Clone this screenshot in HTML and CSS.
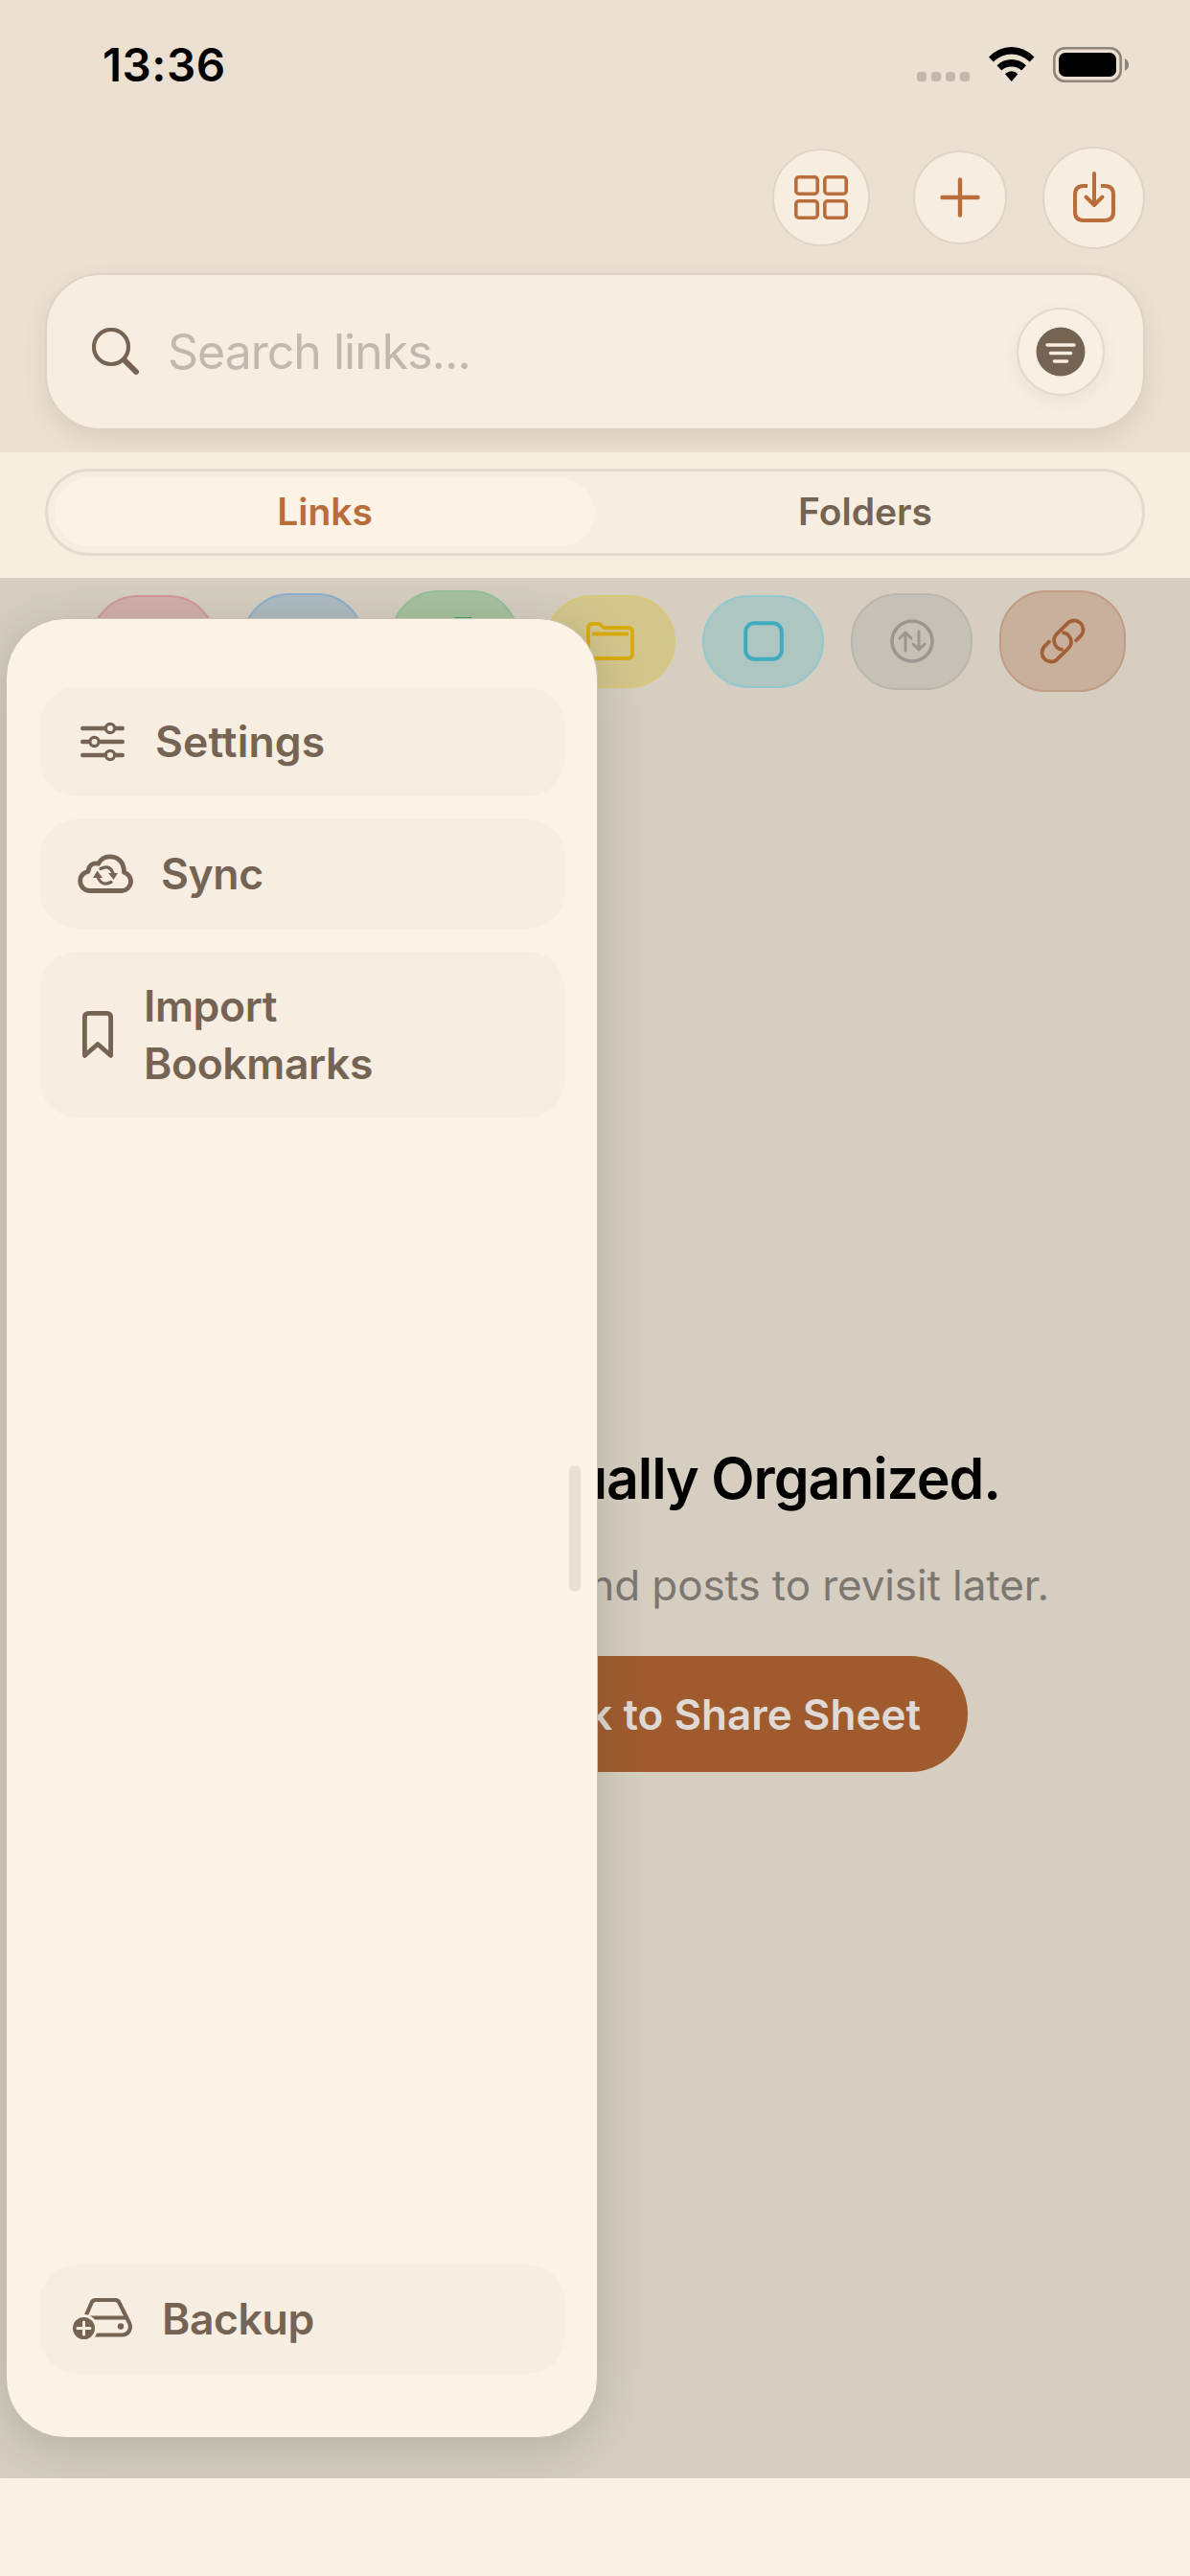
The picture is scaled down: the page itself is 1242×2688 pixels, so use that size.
FILE: index.html
```
<!DOCTYPE html>
<html lang="en">
  <head>
    <meta charset="UTF-8" />
    <meta name="viewport" content="width=device-width, initial-scale=1.0" />
    <title>Links</title>
    <link rel="stylesheet" href="styles.css">
  </head>
  <body>
    <header class="header">
      <div class="status-bar">
        <span class="time">13:36</span>
        <div class="status-icons">
          <svg class="dots" width="56" height="10" viewBox="0 0 56 10">
            <rect x="0" width="10" height="10" rx="3.5" />
            <rect x="15" width="10" height="10" rx="3.5" />
            <rect x="30" width="10" height="10" rx="3.5" />
            <rect x="45" width="10" height="10" rx="3.5" />
          </svg>
          <svg class="wifi" width="48" height="36" viewBox="0 0 48 36">
            <path d="M0 10.5Q10 0 23.7 0T47.5 10.5L42.700 15.500Q34 7.500 23.700 7.500T4.800 15.500Z" />
            <path d="M8.500 19.300Q15 13 23.700 13T39 19.300L34.200 24.500Q30 20.500 23.700 20.500T13.300 24.500Z" />
            <path d="M17 28.300Q20 25.300 23.700 25.300T30.400 28.300L23.700 36Z" />
          </svg>
          <svg class="battery" width="79" height="37" viewBox="0 0 79 37">
            <rect x="1.300" y="1.300" width="69.400" height="34.400" rx="11" fill="none" stroke="#8e857b" stroke-width="2.600" />
            <rect x="6" y="6" width="60" height="25" rx="7" fill="#000" />
            <path d="M75 12Q79 14 79 18.500T75 25Z" fill="#8e857b" />
          </svg>
        </div>
      </div>

      <div class="toolbar">
        <button class="round-btn grid-btn">
          <svg width="56" height="46" viewBox="0 0 56 46" fill="none" stroke="#b86d3a" stroke-width="3.600">
            <rect x="1.800" y="1.800" width="22.400" height="17.400" rx="3" />
            <rect x="31.800" y="1.800" width="22.400" height="17.400" rx="3" />
            <rect x="1.800" y="26.800" width="22.400" height="17.400" rx="3" />
            <rect x="31.800" y="26.800" width="22.400" height="17.400" rx="3" />
          </svg>
        </button>
        <button class="round-btn plus-btn">
          <svg width="42" height="42" viewBox="0 0 42 42" stroke="#b86d3a" stroke-width="4.400" stroke-linecap="round">
            <path d="M21 2.500V39.500M2.500 21H39.500" />
          </svg>
        </button>
        <button class="round-btn import-btn">
          <svg width="44" height="54" viewBox="0 0 44 54" fill="none" stroke="#b86d3a" stroke-width="4" stroke-linecap="round" stroke-linejoin="round">
            <path d="M15 15H11Q2 15 2 24V42Q2 51 11 51H33Q42 51 42 42V24Q42 15 33 15H29" stroke-linecap="butt" />
            <path d="M22 2V34M13.500 26.500L22 35L30.500 26.500" />
          </svg>
        </button>
      </div>

      <div class="search">
        <svg width="50" height="50" viewBox="0 0 50 50" fill="none" stroke="#756353" stroke-linecap="round">
          <circle cx="20" cy="20" r="18" stroke-width="4.200" />
          <path d="M33.500 33.500L46 46" stroke-width="6" />
        </svg>
        <span class="placeholder">Search links...</span>
        <button class="filter-btn">
          <svg width="52" height="52" viewBox="0 0 52 52">
            <circle cx="26" cy="26" r="25.500" fill="#756353" />
            <path d="M12 19H40M15.500 27.500H36.500M19.500 36H32.500" stroke="#f8efe2" stroke-width="3.600" stroke-linecap="round" />
          </svg>
        </button>
      </div>
    </header>

    <nav class="tabs-bar">
      <div class="tabs">
        <div class="tab active">Links</div>
        <div class="tab">Folders</div>
      </div>
    </nav>

    <main class="content">
      <div class="chips">
        <div class="chip red"></div>
        <div class="chip blue"></div>
        <div class="chip green">
          <svg width="50" height="50" viewBox="0 0 50 50" fill="none" stroke="#3f9f58" stroke-width="4"><path d="M26 2H41L47 8V24L25 46L4 24Z" /></svg>
        </div>
        <div class="chip yellow">
          <svg width="50" height="40" viewBox="0 0 50 40" fill="none" stroke="#d9ab0d" stroke-width="3.800" stroke-linejoin="round">
            <path d="M2 34V6Q2 2 6 2H12Q14 2 16 4L18 6H43Q48 6 48 11V33Q48 38 43 38H6Q2 38 2 34ZM6 12.500H44" />
          </svg>
        </div>
        <div class="chip cyan">
          <svg width="42" height="42" viewBox="0 0 42 42" fill="none" stroke="#3eabc1" stroke-width="4"><rect x="2.200" y="2.200" width="37.600" height="37.600" rx="9" /></svg>
        </div>
        <div class="chip gray">
          <svg width="46" height="46" viewBox="0 0 46 46" fill="none" stroke="#9b9690" stroke-width="3" stroke-linecap="round" stroke-linejoin="round">
            <circle cx="23" cy="23" r="21" stroke-width="3.600" />
            <path d="M16 33V14M10 20L16 14L22 20M30 13V32M24 26L30 32L36 26" />
          </svg>
        </div>
        <div class="chip brown">
          <svg width="48" height="48" viewBox="0 0 48 48" fill="none" stroke="#a26036" stroke-width="3.800">
            <path d="M37 24.500L43.200 18.200A9.500 9.500 0 0 0 29.800 4.800L17.900 16.700A9.500 9.500 0 0 0 24.600 32.900" />
            <path d="M11 23.500L4.800 29.800A9.500 9.500 0 0 0 18.200 43.200L30.100 31.300A9.500 9.500 0 0 0 23.400 15.100" />
          </svg>
        </div>
      </div>

      <div class="empty">
        <h1 class="empty-title">Your Links, Visually Organized.</h1>
        <p class="empty-text">Save links, videos and posts to revisit later.</p>
        <button class="share-btn">Add Bookmark to Share Sheet</button>
      </div>

      <!-- side menu, opens over the list -->
      <aside class="drawer">
        <div class="item settings">
          <svg width="46" height="42" viewBox="0 0 46 42" fill="none" stroke="#756353" stroke-width="4.400" stroke-linecap="round">
            <path d="M2.200 7H25M37 7H43.800M2.200 21H8M21 21H43.800M2.200 35H25M37 35H43.800" />
            <g stroke-width="3.200"><circle cx="31" cy="7" r="4.600" /><circle cx="14.500" cy="21" r="4.600" /><circle cx="31" cy="35" r="4.600" /></g>
          </svg>
          <span>Settings</span>
        </div>
        <div class="item sync">
          <svg width="58" height="42" viewBox="0 0 58 42" fill="none" stroke="#756353" stroke-width="4.800" stroke-linecap="round" stroke-linejoin="round">
            <path d="M13 38.500H46A9.800 9.800 0 0 0 48.500 19.300C48.500 8.500 42 2.800 33.500 2.800C28 2.800 24 5.500 21.500 10.300C16 8.800 11.500 12 11 18.300C6 19.500 2.700 23 2.700 28.300C2.700 34 7 38.500 13 38.500Z" />
            <path d="M24 15.500Q33 10.500 37 20M35 29.500Q25 34.500 21 24" stroke-width="3.200" />
            <path d="M32 20H42L37.500 27ZM16 25H26L20.500 17.500Z" fill="#756353" stroke="none" />
          </svg>
          <span>Sync</span>
        </div>
        <div class="item import">
          <svg width="32" height="49" viewBox="0 0 32 49" fill="none" stroke="#756353" stroke-width="4.800" stroke-linejoin="round">
            <path d="M2.400 46.500V6.500Q2.400 2.400 6.500 2.400H25.500Q29.600 2.400 29.600 6.500V46.500L16 34.500Z" />
          </svg>
          <span>Import<br>Bookmarks</span>
        </div>
        <div class="item backup">
          <svg width="62" height="44" viewBox="0 0 62 44" fill="none" stroke="#756353" stroke-width="4.200">
            <path d="M13 20L19.500 5Q20.700 2 24 2H44Q47.300 2 48.500 5L57 22Q60 27 60 30Q59 38.500 51 38.500H20M18 20.500H55" />
            <circle cx="50" cy="29.500" r="3.200" fill="#756353" stroke="none" />
            <circle cx="11.500" cy="31.500" r="13" fill="#756353" stroke="#f7eee1" stroke-width="3" />
            <path d="M11.500 25V38M5 31.500H18" stroke="#f7eee1" stroke-width="3" stroke-linecap="round" />
          </svg>
          <span>Backup</span>
        </div>
        <div class="handle"></div>
      </aside>
    </main>
  </body>
</html>
```
FILE: styles.css
```
* {
  box-sizing: border-box;
}

body {
  margin: 0;
  width: 1242px;
  height: 2688px;
  overflow: hidden;
  background: #faf1e4;
  font-family: Inter, "Liberation Sans", sans-serif;
}

svg {
  display: block;
  flex-shrink: 0;
}

button {
  border: none;
  padding: 0;
  font-family: inherit;
}

.header {
  height: 472px;
  padding: 0 47px;
  background: #ebe0d2;
  overflow: hidden;
}

.status-bar {
  display: flex;
  justify-content: space-between;
  height: 152px;
  padding: 49px 17px 0 60px;
}

.time {
  font-size: 47.5px;
  line-height: 37px;
  font-weight: 600;
  letter-spacing: 0.5px;
}

.status-icons {
  display: flex;
  align-items: flex-start;
}

.dots {
  margin: 26px 19px 0 0;
  fill: #c1b7aa;
}

.wifi {
  margin-right: 19px;
}

.toolbar {
  display: flex;
  justify-content: flex-end;
  align-items: center;
  height: 108px;
}

.round-btn {
  display: flex;
  align-items: center;
  justify-content: center;
  border: 2px solid #ded5c7;
  border-radius: 50%;
  background: #f7eee1;
}

.grid-btn {
  width: 102px;
  height: 102px;
  margin-right: 45px;
}

.plus-btn {
  width: 98px;
  height: 98px;
  margin-right: 37px;
}

.import-btn {
  width: 107px;
  height: 107px;
}

.search {
  display: flex;
  align-items: center;
  height: 164px;
  margin-top: 25px;
  padding: 0 40px 0 47px;
  border: 2px solid #ddd2c4;
  border-radius: 58px;
  background: #f7eee1;
  box-shadow: 0 10px 24px rgba(100, 85, 60, 0.12);
}

.placeholder {
  flex: 1;
  margin-left: 29px;
  color: #c1b8ae;
  font-size: 50px;
  letter-spacing: -1px;
}

.filter-btn {
  display: flex;
  align-items: center;
  justify-content: center;
  width: 92px;
  height: 92px;
  border: 2px solid #e2dacd;
  border-radius: 50%;
  background: #f8f0e2;
  box-shadow: 0 6px 18px rgba(100, 85, 60, 0.08);
}

.tabs-bar {
  height: 131px;
  padding: 17px 47px 0;
  background: #f7eee0;
}

.tabs {
  display: flex;
  height: 91px;
  padding: 7px;
  border: 3px solid #e4dbce;
  border-radius: 46px;
  background: #f7eee1;
}

.tab {
  flex: 1;
  border-radius: 36px;
  color: #756353;
  font-size: 39px;
  line-height: 70px;
  font-weight: 600;
  text-align: center;
}

.tab.active {
  background: #fcf2e5;
  color: #b86d3a;
}

.content {
  position: relative;
  height: 1983px;
  background: #d5cec1;
  overflow: hidden;
}

.chips {
  display: flex;
  align-items: center;
  gap: 28px;
  height: 132px;
  padding-left: 95px;
}

.chip {
  display: flex;
  align-items: center;
  justify-content: center;
  width: 127px;
  height: 97px;
  border: 2px solid;
  border-radius: 49px;
}

.chip.red {
  width: 130px;
  border-color: #d4959a;
  background: #d1afab;
}

.chip.blue {
  height: 101px;
  border-color: #8bafcd;
  background: #adbac0;
}

.chip.green {
  width: 133px;
  height: 106px;
  border-color: #91c197;
  background: #a6c1a0;
}

.chip.yellow {
  width: 136px;
  border-color: #d9c777;
  background: #d3c68d;
}

.chip.cyan {
  border-color: #92c8ce;
  background: #aec6c1;
}

.chip.gray {
  height: 101px;
  border-color: #bbb6ac;
  background: #c6c1b6;
}

.chip.brown {
  width: 132px;
  height: 106px;
  border-color: #c09c84;
  background: #c8b09c;
}

.empty {
  display: flex;
  flex-direction: column;
  align-items: flex-end;
  padding-top: 770px;
  white-space: nowrap;
}

.empty-title {
  margin: 0 198px 0 0;
  font-size: 59px;
  line-height: 76px;
  font-weight: 600;
  letter-spacing: -1.1px;
}

.empty-text {
  margin: 43px 147px 0 0;
  color: #7c7771;
  font-size: 44px;
  line-height: 60px;
  letter-spacing: -0.1px;
}

.share-btn {
  width: 778px;
  height: 121px;
  margin: 44px 232px 0 0;
  padding-right: 49px;
  border-radius: 60px;
  background: #9f5b2e;
  color: #dfdad6;
  font-size: 44px;
  font-weight: 600;
  text-align: right;
}

.drawer {
  position: absolute;
  left: 6px;
  top: 42px;
  display: flex;
  flex-direction: column;
  width: 618px;
  height: 1899px;
  padding: 71px 34px 66px 35px;
  border: 1px solid #c9bfb0;
  border-radius: 62px;
  background: #fcf2e5;
  box-shadow: 0 10px 50px rgba(80, 80, 55, 0.24);
}

.item {
  display: flex;
  align-items: center;
  height: 114px;
  margin-bottom: 24px;
  border-radius: 38px;
  background: #f7eee1;
  color: #756353;
  font-size: 44.5px;
  line-height: 60px;
  font-weight: 600;
  letter-spacing: -0.4px;
}

.item.settings {
  padding-left: 42px;
  gap: 32px;
  letter-spacing: 0.1px;
  font-variant-ligatures: none;
}

.item.sync {
  padding-left: 39px;
  gap: 29px;
}

.item.import {
  height: 173px;
  padding-left: 44px;
  gap: 32px;
}

.item.backup {
  margin: auto 0 0;
  padding-left: 34px;
  gap: 31px;
}

.handle {
  position: absolute;
  right: 17px;
  top: 883px;
  width: 12px;
  height: 132px;
  border-radius: 6px;
  background: #e8e0d3;
}
```
